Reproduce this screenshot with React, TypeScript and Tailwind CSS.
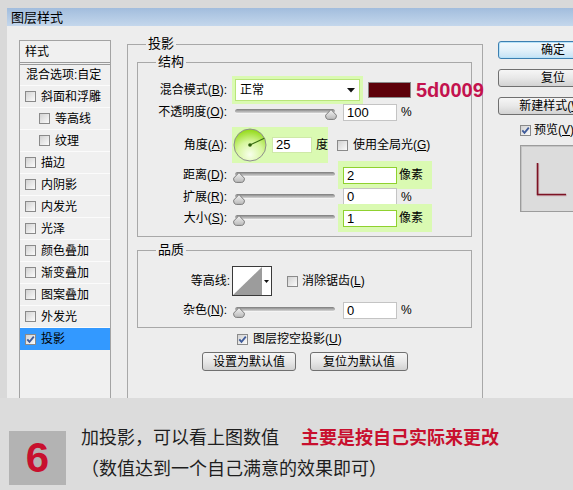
import React from "react";

const CB = ({ checked }: { checked?: boolean }) => (
  <span className="inline-flex w-[11px] h-[11px] shrink-0 items-center justify-center border border-[#8a8a8a] bg-linear-to-br from-[#d2d2d2] to-[#fbfbfb]">
    {checked && (
      <svg width="9" height="9" viewBox="0 0 9 9">
        <path d="M1.3 4.3 L3.5 6.9 L7.8 1.6" fill="none" stroke="#3f5b9a" strokeWidth="1.8" />
      </svg>
    )}
  </span>
);

const Lbl = ({ t, k }: { t: string; k: string }) => (
  <>
    {t}(<span className="underline">{k}</span>):
  </>
);

const Input = ({ v, green, w }: { v: string; green?: boolean; w: string }) => (
  <div
    className={
      green
        ? "h-[17px] shrink-0 bg-white border border-[#8fd12f] pl-[3px] text-[13px] leading-[15px] " + w
        : "h-[17px] shrink-0 bg-white border border-[#c4c4c4] pl-[3px] text-[13px] leading-[15px] " + w
    }
  >
    {v}
  </div>
);

const Slider = ({ right }: { right?: boolean }) => (
  <div className="relative w-[104px] h-[12px] shrink-0 mt-[6px]">
    <div className="absolute left-[2px] right-[2px] top-0 h-[5px] rounded-full bg-linear-to-b from-[#7c7c7c] via-[#a9a9a9] to-[#d6d6d6] border-b border-[#f4f4f4]" />
    <svg
      className={right ? "absolute top-0 right-0" : "absolute top-0 left-0"}
      width="12"
      height="11"
      viewBox="0 0 12 11"
    >
      <defs>
        <linearGradient id="thumbg" x1="0" y1="0" x2="0" y2="1">
          <stop offset="0" stopColor="#f4f4f4" />
          <stop offset="1" stopColor="#b9b9b9" />
        </linearGradient>
      </defs>
      <path d="M6 0.6 L11.4 6.2 Q11.4 10.4 8.5 10.4 L3.5 10.4 Q0.6 10.4 0.6 6.2 Z" fill="url(#thumbg)" stroke="#707070" strokeWidth="0.9" />
    </svg>
  </div>
);

const Btn = ({ children, w, primary }: { children: React.ReactNode; w: string; primary?: boolean }) => (
  <div
    className={
      primary
        ? "h-[18px] shrink-0 flex items-center justify-center rounded-[3px] border border-[#3c7fb1] bg-linear-to-b from-[#f2f9fd] via-[#e3f1fa] to-[#c4e2f5] shadow-[inset_0_0_0_1px_#b8e2f8] leading-none " + w
        : "h-[18px] shrink-0 flex items-center justify-center rounded-[3px] border border-[#707070] bg-linear-to-b from-[#f6f6f6] via-[#e8e8e8] to-[#d2d2d2] leading-none " + w
    }
  >
    {children}
  </div>
);

const Legend = ({ t }: { t: string }) => (
  <div className="-mt-[9px] ml-[18px] px-[2px] w-fit bg-[#ededed] leading-[16px] text-[13px]">{t}</div>
);

const listItems: { t: string; indent?: boolean; sel?: boolean }[] = [
  { t: "斜面和浮雕" },
  { t: "等高线", indent: true },
  { t: "纹理", indent: true },
  { t: "描边" },
  { t: "内阴影" },
  { t: "内发光" },
  { t: "光泽" },
  { t: "颜色叠加" },
  { t: "渐变叠加" },
  { t: "图案叠加" },
  { t: "外发光" },
  { t: "投影", sel: true },
];

export default function App() {
  return (
    <div className="w-[573px] h-[490px] overflow-hidden flex flex-col bg-[#d9d9d9] text-[12px] text-black font-['Liberation_Sans','Noto_Sans_CJK_SC',sans-serif]">
      <div className="h-[8px] shrink-0" />
      {/* dialog */}
      <div className="ml-[7px] w-[640px] h-[390px] shrink-0 flex flex-col bg-[#ededed]">
        <div className="h-[18px] shrink-0 flex items-center pl-[4px] bg-linear-to-b from-[#a2bddd] to-[#c4d7ec] text-[13px] leading-none">
          图层样式
        </div>
        <div className="flex-1 flex min-h-0">
          {/* styles list */}
          <div className="ml-[12px] mt-[14px] w-[92px] shrink-0 border border-b-0 border-[#a3a3a3] bg-[#f0f0f0]">
            <div className="h-[21px] flex items-center pl-[5px]">样式</div>
            <div className="border-b-[3px] border-double border-[#9a9a9a]" />
            <div className="h-[21px] flex items-center pl-[6px] border-b border-[#fbfbfb] whitespace-nowrap">混合选项:自定</div>
            {listItems.map((it) => (
              <div
                key={it.t}
                className={
                  it.sel
                    ? "h-[22px] flex items-center pl-[5px] bg-[#3399ff]"
                    : it.indent
                    ? "h-[22px] flex items-center pl-[19px] border-b border-[#fbfbfb]"
                    : "h-[22px] flex items-center pl-[5px] border-b border-[#fbfbfb]"
                }
              >
                <CB checked={it.sel} />
                <span className="ml-[5px] whitespace-nowrap">{it.t}</span>
              </div>
            ))}
          </div>

          {/* main fieldset 投影 */}
          <div className="ml-[16px] mt-[18px] w-[356px] shrink-0 border border-b-0 border-[#a8a8a8] flex flex-col">
            <Legend t="投影" />
            {/* 结构 */}
            <div className="mt-[10px] ml-[9px] mr-[10px] border border-[#a8a8a8] pb-[7px]">
              <Legend t="结构" />
              {/* row 1 */}
              <div className="mt-[9px] h-[22px] flex items-center">
                <div className="w-[89px] shrink-0 text-right whitespace-nowrap">
                  <Lbl t="混合模式" k="B" />
                </div>
                <div className="ml-[5px] w-[131px] h-[28px] shrink-0 p-[3px] bg-[#dafab2]">
                  <div className="w-full h-full bg-white border border-[#b9e57a] flex items-center pl-[4px] pr-[4px]">
                    <span className="flex-1">正常</span>
                    <svg width="8" height="5" viewBox="0 0 8 5">
                      <path d="M0 0 H8 L4 4.5 Z" fill="#111" />
                    </svg>
                  </div>
                </div>
                <div className="ml-[5px] w-[43px] h-[16px] shrink-0 bg-[#5d0009] border border-[#8a8a8a]" />
                <span className="ml-[5px] shrink-0 whitespace-nowrap font-bold text-[20px] leading-none text-[#c3124e] font-['Liberation_Sans',sans-serif]">
                  5d0009
                </span>
              </div>
              {/* row 2 */}
              <div className="h-[22px] flex items-center">
                <div className="w-[89px] shrink-0 text-right whitespace-nowrap">
                  <Lbl t="不透明度" k="O" />
                </div>
                <div className="ml-[6px]">
                  <Slider right />
                </div>
                <div className="ml-[6px]">
                  <Input v="100" w="w-[54px]" />
                </div>
                <span className="ml-[4px]">%</span>
              </div>
              {/* row 3 */}
              <div className="mt-[5px] h-[34px] flex items-center">
                <div className="w-[89px] shrink-0 text-right whitespace-nowrap">
                  <Lbl t="角度" k="A" />
                </div>
                <div className="ml-[5px] w-[96px] h-[36px] shrink-0 flex items-center bg-[#dafab2]">
                  <svg className="ml-[1px] shrink-0" width="34" height="34" viewBox="0 0 34 34">
                    <defs>
                      <radialGradient id="dialg" cx="50%" cy="80%" r="75%">
                        <stop offset="0" stopColor="#f8ffec" />
                        <stop offset="0.55" stopColor="#d6f69c" />
                        <stop offset="1" stopColor="#98dc22" />
                      </radialGradient>
                    </defs>
                    <circle cx="17" cy="17" r="16" fill="url(#dialg)" stroke="#8e8e8e" />
                    <line x1="17" y1="17" x2="31.3" y2="10.3" stroke="#3a6e12" strokeWidth="1.2" />
                    <circle cx="17" cy="17" r="1.8" fill="#2d5e0a" />
                  </svg>
                  <div className="ml-[5px] w-[40px] h-[16px] shrink-0 bg-white border border-[#cfe9a8] pl-[3px] text-[13px] leading-[14px]">25</div>
                  <span className="ml-[4px]">度</span>
                </div>
                <div className="ml-[9px] flex items-center">
                  <CB />
                  <span className="ml-[5px] whitespace-nowrap">
                    使用全局光(<span className="underline">G</span>)
                  </span>
                </div>
              </div>
              {/* row 4 */}
              <div className="mt-[2px] h-[22px] flex items-center">
                <div className="w-[89px] shrink-0 text-right whitespace-nowrap">
                  <Lbl t="距离" k="D" />
                </div>
                <div className="ml-[6px]">
                  <Slider />
                </div>
                <div className="ml-[1px] w-[94px] h-[28px] shrink-0 flex items-center pl-[5px] bg-[#dafab2]">
                  <Input v="2" green w="w-[54px]" />
                  <span className="ml-[2px]">像素</span>
                </div>
              </div>
              {/* row 5 */}
              <div className="h-[21px] flex items-center">
                <div className="w-[89px] shrink-0 text-right whitespace-nowrap">
                  <Lbl t="扩展" k="R" />
                </div>
                <div className="ml-[6px]">
                  <Slider />
                </div>
                <div className="ml-[6px]">
                  <Input v="0" w="w-[54px]" />
                </div>
                <span className="ml-[4px]">%</span>
              </div>
              {/* row 6 */}
              <div className="h-[22px] flex items-center">
                <div className="w-[89px] shrink-0 text-right whitespace-nowrap">
                  <Lbl t="大小" k="S" />
                </div>
                <div className="ml-[6px]">
                  <Slider />
                </div>
                <div className="ml-[1px] w-[94px] h-[28px] shrink-0 flex items-center pl-[5px] bg-[#dafab2]">
                  <Input v="1" green w="w-[54px]" />
                  <span className="ml-[2px]">像素</span>
                </div>
              </div>
            </div>

            {/* 品质 */}
            <div className="mt-[13px] ml-[9px] mr-[10px] border border-[#a8a8a8] pb-[6px]">
              <Legend t="品质" />
              <div className="mt-[8px] h-[30px] flex items-center">
                <div className="w-[92px] shrink-0 text-right whitespace-nowrap">等高线:</div>
                <div className="ml-[2px] w-[40px] h-[30px] shrink-0 flex border border-[#3a3a3a] bg-white">
                  <svg className="shrink-0" width="29" height="28" viewBox="0 0 29 28">
                    <polygon points="0,28 29,0 29,28" fill="#9c9c9c" />
                  </svg>
                  <div className="flex-1 flex items-center justify-center">
                    <svg width="5" height="3" viewBox="0 0 5 3">
                      <path d="M0 0 H5 L2.5 3 Z" fill="#111" />
                    </svg>
                  </div>
                </div>
                <div className="ml-[15px] flex items-center">
                  <CB />
                  <span className="ml-[4px] whitespace-nowrap">
                    消除锯齿(<span className="underline">L</span>)
                  </span>
                </div>
              </div>
              <div className="mt-[3px] h-[22px] flex items-center">
                <div className="w-[89px] shrink-0 text-right whitespace-nowrap">
                  <Lbl t="杂色" k="N" />
                </div>
                <div className="ml-[6px]">
                  <Slider />
                </div>
                <div className="ml-[6px]">
                  <Input v="0" w="w-[54px]" />
                </div>
                <span className="ml-[4px]">%</span>
              </div>
            </div>

            <div className="mt-[1px] h-[20px] flex items-center pl-[109px]">
              <CB checked />
              <span className="ml-[5px] whitespace-nowrap">
                图层挖空投影(<span className="underline">U</span>)
              </span>
            </div>
            <div className="mt-[3px] flex justify-center gap-[14px]">
              <Btn w="w-[94px] h-[19px]">设置为默认值</Btn>
              <Btn w="w-[98px] h-[19px]">复位为默认值</Btn>
            </div>
          </div>

          {/* right column */}
          <div className="ml-[15px] mt-[15px] w-[110px] shrink-0 flex flex-col">
            <Btn primary w="w-[110px]">确定</Btn>
            <div className="mt-[10px]">
              <Btn w="w-[110px]">复位</Btn>
            </div>
            <div className="mt-[10px]">
              <Btn w="w-[110px]">
                <span className="whitespace-nowrap">
                  新建样式(<span className="underline">W</span>)
                </span>
              </Btn>
            </div>
            <div className="mt-[7px] h-[16px] flex items-center pl-[22px]">
              <CB checked />
              <span className="ml-[3px] whitespace-nowrap">
                预览(<span className="underline">V</span>)
              </span>
            </div>
            <div className="mt-[7px] ml-[22px] w-[80px] h-[67px] border border-[#9c9c9c] bg-[#dcdcdc] shadow-[inset_1px_1px_0_#c4c4c4]">
              <svg width="60" height="60" viewBox="0 0 60 60">
                <path d="M16.5 17 V48.5 H45" fill="none" stroke="#c9a9ae" strokeWidth="2.2" transform="translate(0.6,0.6)" />
                <path d="M16.5 17 V48.5 H45" fill="none" stroke="#7d1324" strokeWidth="1.6" />
              </svg>
            </div>
          </div>
        </div>
      </div>

      {/* bottom band */}
      <div className="flex-1 flex pl-[9px] bg-[#dcdcdc] font-['Noto_Sans_CJK_SC',sans-serif]">
        <div className="mt-[33px] w-[57px] h-[54px] shrink-0 flex items-center justify-center bg-[#b3b3b3] text-[#c8102e] font-bold text-[42px] leading-none font-['Liberation_Sans',sans-serif]">
          6
        </div>
        <div className="ml-[15px] mt-[23px] text-[18px] leading-[31px] text-[#1e1e1e] whitespace-nowrap">
          <div>
            加投影，可以看上图数值
            <span className="ml-[22px] font-bold text-[#c8102e]">主要是按自己实际来更改</span>
          </div>
          <div>（数值达到一个自己满意的效果即可）</div>
        </div>
      </div>
    </div>
  );
}
